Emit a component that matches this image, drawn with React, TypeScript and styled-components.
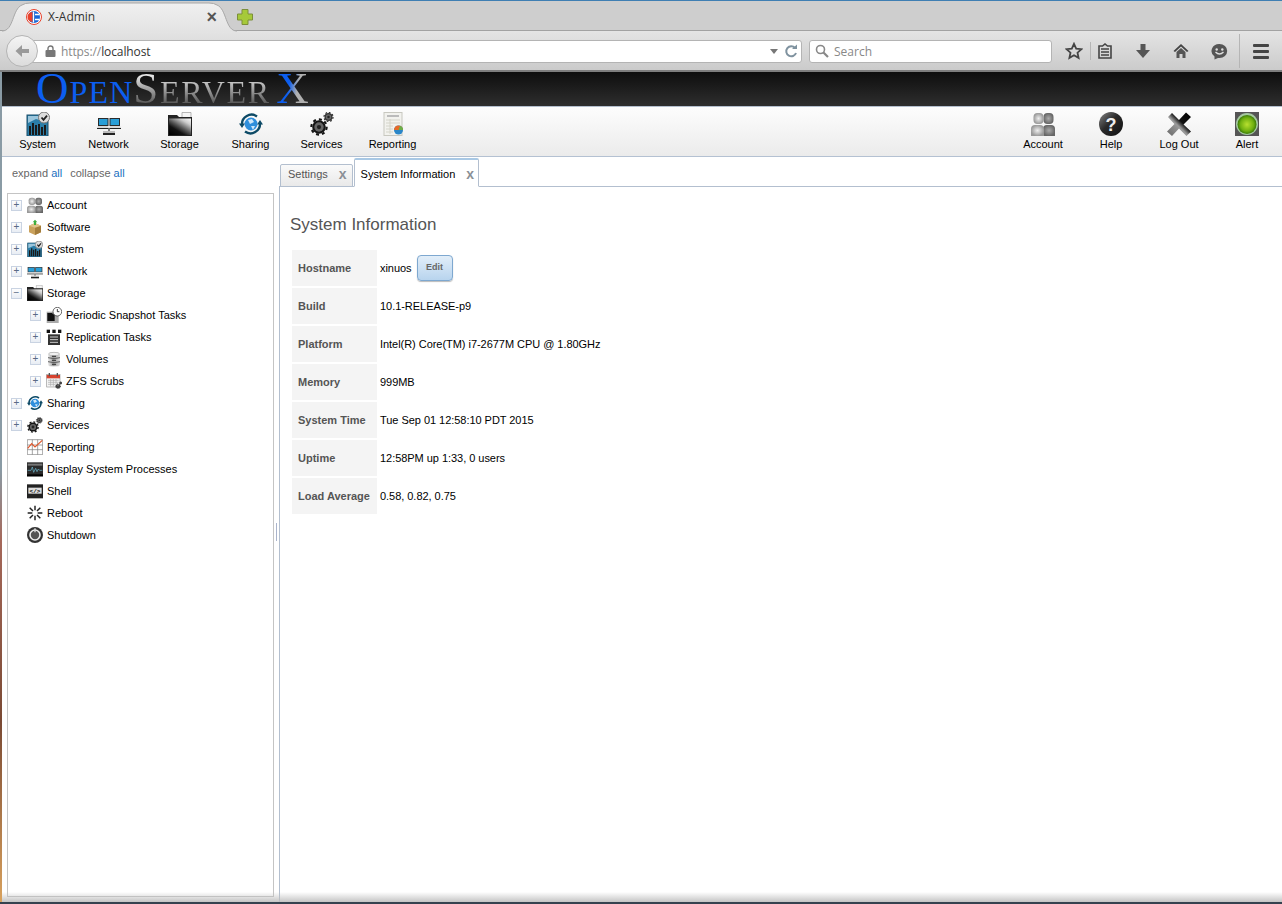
import * as React from 'react';
import styled, { createGlobalStyle } from 'styled-components';

const GlobalStyle = createGlobalStyle`
    html, body {
        margin: 0;
        padding: 0;
        background: #fff;
        overflow: hidden;
    }
    * {
        box-sizing: border-box;
    }
`;

const colors = {
    text: '#000',
    label: '#555',
    chrome: '#cecece',
    line: '#b3bfcf',
    tree: '#c4c4c4',
};

/* drawn icons, all on a 24 unit grid */

const IconBase: React.FC<{ size: number; children: React.ReactNode }> = ({ size, children }) => (
    <svg width={size} height={size} viewBox="0 0 24 24">
        {children}
    </svg>
);

interface IconProps {
    size: number;
}

const Gear: React.FC<{ cx: number; cy: number; r: number; color?: string }> = ({ cx, cy, r, color = '#151515' }) => (
    <g>
        <circle cx={cx} cy={cy} r={r * 0.8} fill={color} />
        <circle
            cx={cx}
            cy={cy}
            r={r * 0.9}
            fill="none"
            stroke={color}
            strokeWidth={r * 0.25}
            strokeDasharray={`${r * 0.35} ${r * 0.35}`}
        />
        <circle cx={cx} cy={cy} r={r * 0.55} fill="#666" />
        <circle cx={cx} cy={cy} r={r * 0.25} fill="#222" />
    </g>
);

const SystemIcon: React.FC<IconProps> = ({ size }) => (
    <IconBase size={size}>
        <rect x="1" y="3" width="21" height="21" fill="#2b7ea8" stroke="#1a4d68" />
        <path d="M2 11 L10 7 L21 10 V4 H2 Z" fill="#9cc6dc" />
        <path d="M4 23 V14 M7 23 V11 M10 23 V13 M13 23 V12 M16 23 V15 M19 23 V13" stroke="#1a1a1a" strokeWidth="2" />
        <circle cx="18" cy="5.5" r="5.5" fill="#ddd" stroke="#777" />
        <path d="M15.5 5.5 L17.5 7.8 L21 3.6" fill="none" stroke="#222" strokeWidth="1.8" />
    </IconBase>
);

const NetworkIcon: React.FC<IconProps> = ({ size }) => (
    <IconBase size={size}>
        <rect x="1.5" y="6.5" width="9.5" height="7" fill="#2a9fd8" stroke="#2b2b2b" />
        <rect x="13" y="6.5" width="9.5" height="7" fill="#2a9fd8" stroke="#2b2b2b" />
        <path d="M1 14 H11 L12 16 H0 Z M13 14 H23 L24 16 H12 Z" fill="#d8d8d8" />
        <path d="M0 16.5 H11.5 M12.5 16.5 H24" stroke="#222" />
        <path d="M12 16 V20" stroke="#555" strokeWidth="1.5" />
        <rect x="6" y="19" width="12" height="2" fill="#bbb" />
        <rect x="6" y="21" width="12" height="2" fill="#222" />
    </IconBase>
);

const StorageIcon: React.FC<IconProps> = ({ size }) => (
    <IconBase size={size}>
        <defs>
            <linearGradient id="folderFace" x1="0.1" y1="1" x2="0.9" y2="0">
                <stop offset="0" stopColor="#000" />
                <stop offset="0.3" stopColor="#111" />
                <stop offset="0.5" stopColor="#555" />
                <stop offset="0.8" stopColor="#ccc" />
                <stop offset="1" stopColor="#f0f0f0" />
            </linearGradient>
        </defs>
        <path d="M14 0.5 H23 V6 H14 Z" fill="#f4f4f4" stroke="#999" strokeWidth="0.7" />
        <path d="M0 3 H9 L11 5 H24 V24 H0 Z" fill="#222" />
        <rect x="1" y="6.5" width="22" height="16.5" fill="url(#folderFace)" />
    </IconBase>
);

const SharingIcon: React.FC<IconProps> = ({ size }) => (
    <IconBase size={size}>
        <circle cx="12" cy="12" r="6.5" fill="#2f8fdc" />
        <path d="M9 8 L13 7 L15 10 L11 12 Z M12 14 L16 14 L14 18 Z" fill="#cfe8fa" />
        <path d="M3 13 A9.5 9.5 0 0 1 18 4.5" fill="none" stroke="#0d4a66" strokeWidth="2.4" />
        <path d="M21 11 A9.5 9.5 0 0 1 6 19.5" fill="none" stroke="#0d4a66" strokeWidth="2.4" />
        <path d="M0 11.5 H6 L3 16 Z M24 12.5 H18 L21 8 Z" fill="#0d4a66" />
    </IconBase>
);

const ServicesIcon: React.FC<IconProps> = ({ size }) => (
    <IconBase size={size}>
        <Gear cx={9} cy={15} r={8.5} />
        <Gear cx={18.5} cy={5} r={5} color="#333" />
    </IconBase>
);

const ReportingIcon: React.FC<IconProps> = ({ size }) => (
    <IconBase size={size}>
        <rect x="3" y="0.5" width="18" height="23" fill="#f2f2ee" stroke="#c8c8c0" />
        <rect x="6" y="3" width="12" height="2" fill="#bbb" />
        <path d="M5 8 H19 M5 11 H19 M5 14 H12 M5 17 H12 M5 20 H12 M9 7 V22" stroke="#d4d4ca" />
        <circle cx="17.5" cy="18" r="4.5" fill="#2a86c8" />
        <path d="M13 18 A4.5 4.5 0 0 1 22 18 Z" fill="#e86a28" />
        <path d="M17.5 18 L22 18 A4.5 4.5 0 0 0 19 13.8 Z" fill="#6ab04a" />
    </IconBase>
);

const AccountIcon: React.FC<IconProps> = ({ size }) => (
    <IconBase size={size}>
        <defs>
            <radialGradient id="personLight">
                <stop offset="0" stopColor="#eee" />
                <stop offset="1" stopColor="#999" />
            </radialGradient>
            <radialGradient id="personDark">
                <stop offset="0" stopColor="#aaa" />
                <stop offset="1" stopColor="#666" />
            </radialGradient>
        </defs>
        <rect x="12.5" y="1" width="10" height="11" rx="4" fill="url(#personDark)" />
        <path d="M12 24 V17 Q12 13 16 13 H20 Q24 13 24 17 V24 Z" fill="url(#personDark)" />
        <rect x="2.5" y="1" width="10" height="11" rx="4" fill="url(#personLight)" />
        <path d="M0 24 V17 Q0 13 4 13 H9 Q13 13 13 17 V24 Z" fill="url(#personLight)" />
    </IconBase>
);

const HelpIcon: React.FC<IconProps> = ({ size }) => (
    <IconBase size={size}>
        <defs>
            <linearGradient id="helpFace" x1="0" y1="0" x2="1" y2="1">
                <stop offset="0" stopColor="#888" />
                <stop offset="0.45" stopColor="#2a2a2a" />
                <stop offset="1" stopColor="#111" />
            </linearGradient>
        </defs>
        <circle cx="12" cy="12" r="12" fill="url(#helpFace)" />
        <text x="12" y="18.5" textAnchor="middle" fontFamily="Liberation Sans" fontWeight="700" fontSize="18" fill="#eee">
            ?
        </text>
    </IconBase>
);

const LogOutIcon: React.FC<IconProps> = ({ size }) => (
    <IconBase size={size}>
        <defs>
            <linearGradient id="crossFace" x1="0" y1="1" x2="1" y2="0">
                <stop offset="0" stopColor="#666" />
                <stop offset="0.45" stopColor="#9a9a9a" />
                <stop offset="0.6" stopColor="#111" />
                <stop offset="1" stopColor="#000" />
            </linearGradient>
        </defs>
        <path
            d="M1 5 L5 1 L12 8 L19 0.5 L24 5 L16.5 12.5 L24 19.5 L19.5 24 L12 16.5 L5 24 L0 19.5 L7.5 12 Z"
            fill="url(#crossFace)"
        />
    </IconBase>
);

const AlertIcon: React.FC<IconProps> = ({ size }) => (
    <IconBase size={size}>
        <defs>
            <radialGradient id="alertLamp">
                <stop offset="0" stopColor="#b8e030" />
                <stop offset="0.7" stopColor="#6fb010" />
                <stop offset="1" stopColor="#3a7a05" />
            </radialGradient>
        </defs>
        <rect width="24" height="24" fill="#555" />
        <circle cx="12" cy="12" r="11" fill="#a5c9a0" />
        <circle cx="12" cy="12.5" r="9.5" fill="url(#alertLamp)" />
    </IconBase>
);

const SoftwareIcon: React.FC<IconProps> = ({ size }) => (
    <IconBase size={size}>
        <path d="M3 10 L12 6 L21 10 V20 L12 24 L3 20 Z" fill="#c9a15c" />
        <path d="M12 12 L21 10 V20 L12 24 Z" fill="#a47d3c" />
        <path d="M3 10 L12 6 L21 10 L12 13 Z" fill="#e0c28a" />
        <path d="M12 1 L15.5 5 H13.5 V9 H10.5 V5 H8.5 Z" fill="#3fae3f" />
    </IconBase>
);

const SnapshotIcon: React.FC<IconProps> = ({ size }) => (
    <IconBase size={size}>
        <rect x="1" y="7" width="18" height="17" fill="#aaa" />
        <path d="M2 9 H9 L11 11 H13 V21 H2 Z" fill="#111" />
        <circle cx="17" cy="7" r="6.5" fill="#fff" stroke="#222" />
        <path d="M17 3 V7 H20" fill="none" stroke="#222" strokeWidth="1.3" />
    </IconBase>
);

const ReplicationIcon: React.FC<IconProps> = ({ size }) => (
    <IconBase size={size}>
        <rect x="1" y="1" width="5" height="5" fill="#111" />
        <rect x="9.5" y="1" width="5" height="5" fill="#111" />
        <rect x="18" y="1" width="5" height="5" fill="#111" />
        <rect x="3" y="8" width="18" height="16" fill="#333" />
        <path d="M6 12 H18 M6 16 H18 M6 20 H18" stroke="#ccc" strokeWidth="1.5" />
    </IconBase>
);

const VolumesIcon: React.FC<IconProps> = ({ size }) => (
    <IconBase size={size}>
        <defs>
            <linearGradient id="volumeSide" x1="0" y1="0" x2="1" y2="0">
                <stop offset="0" stopColor="#eee" />
                <stop offset="0.45" stopColor="#999" />
                <stop offset="1" stopColor="#ddd" />
            </linearGradient>
        </defs>
        <rect x="3" y="2" width="18" height="21" rx="4" fill="url(#volumeSide)" />
        <ellipse cx="12" cy="4.5" rx="8" ry="2.5" fill="#f2f2f2" stroke="#999" strokeWidth="0.7" />
        <path d="M3 10 Q12 13 21 10 M3 16 Q12 19 21 16" fill="none" stroke="#555" strokeWidth="1.4" />
        <path d="M9 8 H15 M9 14 H15 M9 20 H15" stroke="#444" strokeWidth="2" />
    </IconBase>
);

const ScrubsIcon: React.FC<IconProps> = ({ size }) => (
    <IconBase size={size}>
        <rect x="1" y="2" width="20" height="19" fill="#f4f4f4" stroke="#999" />
        <rect x="1" y="3" width="20" height="5" fill="#d8422e" />
        <path d="M5 0 V5 M17 0 V5" stroke="#555" strokeWidth="2" />
        <path d="M3 11 H19 M3 14 H19 M3 17 H14 M7 9 V20 M11 9 V20 M15 9 V17" stroke="#aaa" />
        <Gear cx={18} cy={20} r={4} />
        <Gear cx={22} cy={15} r={2.2} />
    </IconBase>
);

const ChartIcon: React.FC<IconProps> = ({ size }) => (
    <IconBase size={size}>
        <path d="M0.5 1 H23.5 V23.5 H0.5 Z M0.5 9 H23.5 M0.5 16 H23.5 M8 1 V23.5 M16 1 V23.5" fill="#fff" stroke="#777" />
        <path d="M1 14 L7 7 L12 12 L23 2" fill="none" stroke="#e2582c" strokeWidth="1.8" />
    </IconBase>
);

const ProcessIcon: React.FC<IconProps> = ({ size }) => (
    <IconBase size={size}>
        <rect y="2" width="24" height="21" fill="#2b2b2b" />
        <rect x="1" y="4" width="22" height="3" fill="#777" />
        <path d="M1 14 H6 L8 9 L10 17 L13 11 L15 16 L17 12 L19 14 H23" fill="none" stroke="#6fc0d8" />
        <rect y="20" width="24" height="3" fill="#000" />
    </IconBase>
);

const ShellIcon: React.FC<IconProps> = ({ size }) => (
    <IconBase size={size}>
        <rect y="2" width="24" height="21" fill="#222" />
        <rect x="2" y="7" width="20" height="9" fill="#ddd" />
        <text x="12" y="14.5" textAnchor="middle" fontFamily="Liberation Mono" fontWeight="700" fontSize="9" fill="#000">
            {'</>'}
        </text>
    </IconBase>
);

const RebootIcon: React.FC<IconProps> = ({ size }) => (
    <IconBase size={size}>
        <path
            d="M12 1 V8 M12 16 V23 M1 12 H8 M16 12 H23 M4 4 L9 9 M15 15 L20 20 M20 4 L15 9 M9 15 L4 20"
            stroke="#222"
            strokeWidth="2.2"
        />
    </IconBase>
);

const ShutdownIcon: React.FC<IconProps> = ({ size }) => (
    <IconBase size={size}>
        <circle cx="12" cy="12" r="12" fill="#333" />
        <circle cx="12" cy="12" r="7.5" fill="#555" stroke="#eee" strokeWidth="2.4" />
        <path d="M12 2 V8" stroke="#ddd" strokeWidth="2" />
    </IconBase>
);

/* browser chrome icons */

const Favicon = () => (
    <svg width="16" height="16" viewBox="0 0 16 16">
        <circle cx="8" cy="8" r="7.5" fill="#fff" stroke="#e8402a" />
        <circle cx="8" cy="8" r="6" fill="#1668d8" />
        <path d="M6.5 3 A5 5 0 0 0 6.5 13 Z" fill="#e8402a" />
        <path d="M7.5 2.5 V13.5 M9 5.5 H13.5 M9 10.5 H13.5" stroke="#fff" strokeWidth="1.3" />
    </svg>
);

const NewTabIcon = () => (
    <svg width="18" height="18" viewBox="0 0 18 18">
        <path d="M6 1.5 H12 V6 H16.5 V12 H12 V16.5 H6 V12 H1.5 V6 H6 Z" fill="#a6c93a" stroke="#7c8f3a" />
    </svg>
);

const BackIcon = () => (
    <svg width="16" height="16" viewBox="0 0 16 16">
        <path d="M1.5 8 L8 2 V6 H15 V10 H8 V14 Z" fill="#9a9a9a" />
    </svg>
);

const LockIcon = () => (
    <svg width="11" height="12" viewBox="0 0 11 12">
        <path d="M3 5 V3.5 A2.5 2.5 0 0 1 8 3.5 V5" fill="none" stroke="#777" strokeWidth="1.4" />
        <rect x="0.5" y="5" width="10" height="7" rx="1" fill="#777" />
    </svg>
);

const ReloadIcon = () => (
    <svg width="14" height="14" viewBox="0 0 14 14">
        <path d="M11 4 A5 5 0 1 0 12 9" fill="none" stroke="#7f929f" strokeWidth="2" />
        <path d="M8 5 H13 V0.5 Z" fill="#7f929f" />
    </svg>
);

const SearchIcon = () => (
    <svg width="14" height="14" viewBox="0 0 14 14">
        <circle cx="5.5" cy="5.5" r="4" fill="none" stroke="#888" strokeWidth="1.6" />
        <path d="M8.5 8.5 L13 13" stroke="#888" strokeWidth="2.2" />
    </svg>
);

const StarIcon = () => (
    <svg width="18" height="18" viewBox="0 0 18 18">
        <path
            d="M9 1.8 L11.2 6.6 L16.4 7.2 L12.5 10.7 L13.6 15.9 L9 13.3 L4.4 15.9 L5.5 10.7 L1.6 7.2 L6.8 6.6 Z"
            fill="none"
            stroke="#444"
            strokeWidth="1.8"
        />
    </svg>
);

const ClipboardIcon = () => (
    <svg width="16" height="16" viewBox="0 0 16 16">
        <path d="M2 3 H5.5 L8 1 L10.5 3 H14 V15 H2 Z" fill="none" stroke="#444" strokeWidth="1.6" />
        <path d="M4 6 H12 M4 9 H12 M4 12 H12" stroke="#444" strokeWidth="1.6" />
    </svg>
);

const DownloadIcon = () => (
    <svg width="16" height="16" viewBox="0 0 16 16">
        <path d="M5.5 1 H10.5 V7 H15 L8 15 L1 7 H5.5 Z" fill="#555" />
    </svg>
);

const HomeIcon = () => (
    <svg width="16" height="16" viewBox="0 0 16 16">
        <path d="M0.5 8 L8 1 L15.5 8 L14 9 L8 3.5 L2 9 Z" fill="#444" />
        <path d="M3.5 9 L8 5 L12.5 9 V15 H9.5 V11 H6.5 V15 H3.5 Z" fill="#555" />
    </svg>
);

const SmileIcon = () => (
    <svg width="17" height="17" viewBox="0 0 17 17">
        <path d="M8.5 1 A7.7 7 0 0 1 8.5 15 H7 L3.5 16.5 V13.5 A7.7 7 0 0 1 8.5 1 Z" fill="#555" />
        <circle cx="5.7" cy="6.5" r="1.2" fill="#ddd" />
        <circle cx="11.3" cy="6.5" r="1.2" fill="#ddd" />
        <path d="M4.5 9 Q8.5 13 12.5 9" fill="none" stroke="#ddd" strokeWidth="1.4" />
    </svg>
);

const TabCurve = styled.svg`
    position: absolute;
    left: 0;
    top: 0;
`;

/* page data */

const leftTools = [
    { label: 'System', icon: SystemIcon },
    { label: 'Network', icon: NetworkIcon },
    { label: 'Storage', icon: StorageIcon },
    { label: 'Sharing', icon: SharingIcon },
    { label: 'Services', icon: ServicesIcon },
    { label: 'Reporting', icon: ReportingIcon },
];

const rightTools = [
    { label: 'Account', icon: AccountIcon },
    { label: 'Help', icon: HelpIcon },
    { label: 'Log Out', icon: LogOutIcon },
    { label: 'Alert', icon: AlertIcon },
];

type TreeNode = {
    label: string;
    icon: React.FC<IconProps>;
    toggle?: '+' | '-';
    nested?: boolean;
};

const treeNodes: TreeNode[] = [
    { label: 'Account', icon: AccountIcon, toggle: '+' },
    { label: 'Software', icon: SoftwareIcon, toggle: '+' },
    { label: 'System', icon: SystemIcon, toggle: '+' },
    { label: 'Network', icon: NetworkIcon, toggle: '+' },
    { label: 'Storage', icon: StorageIcon, toggle: '-' },
    { label: 'Periodic Snapshot Tasks', icon: SnapshotIcon, toggle: '+', nested: true },
    { label: 'Replication Tasks', icon: ReplicationIcon, toggle: '+', nested: true },
    { label: 'Volumes', icon: VolumesIcon, toggle: '+', nested: true },
    { label: 'ZFS Scrubs', icon: ScrubsIcon, toggle: '+', nested: true },
    { label: 'Sharing', icon: SharingIcon, toggle: '+' },
    { label: 'Services', icon: ServicesIcon, toggle: '+' },
    { label: 'Reporting', icon: ChartIcon },
    { label: 'Display System Processes', icon: ProcessIcon },
    { label: 'Shell', icon: ShellIcon },
    { label: 'Reboot', icon: RebootIcon },
    { label: 'Shutdown', icon: ShutdownIcon },
];

const infoRows: { label: string; value: string; edit?: boolean }[] = [
    { label: 'Hostname', value: 'xinuos', edit: true },
    { label: 'Build', value: '10.1-RELEASE-p9' },
    { label: 'Platform', value: 'Intel(R) Core(TM) i7-2677M CPU @ 1.80GHz' },
    { label: 'Memory', value: '999MB' },
    { label: 'System Time', value: 'Tue Sep 01 12:58:10 PDT 2015' },
    { label: 'Uptime', value: '12:58PM up 1:33, 0 users' },
    { label: 'Load Average', value: '0.58, 0.82, 0.75' },
];

const App: React.FC = () => {
    return (
        <Page>
            <GlobalStyle />
            <TabStrip>
                <BrowserTab>
                    <TabCurve width="235" height="31" viewBox="0 0 235 31">
                        <defs>
                            <linearGradient id="browserTab" x1="0" y1="0" x2="0" y2="1">
                                <stop offset="0" stopColor="#f0f0f0" />
                                <stop offset="1" stopColor="#e3e3e3" />
                            </linearGradient>
                        </defs>
                        <path
                            d="M0 31 V30 C12 30 10 8 20 4 Q23 2 28 2 H207 Q212 2 215 4 C225 8 223 30 235 30 V31 Z"
                            fill="url(#browserTab)"
                        />
                        <path
                            d="M0 30 C12 30 10 8 20 4 Q23 2 28 2 H207 Q212 2 215 4 C225 8 223 30 235 30"
                            fill="none"
                            stroke="#a8a8a8"
                        />
                    </TabCurve>
                    <TabFavicon>
                        <Favicon />
                    </TabFavicon>
                    <TabTitle>X-Admin</TabTitle>
                    <TabClose>×</TabClose>
                </BrowserTab>
                <NewTab>
                    <NewTabIcon />
                </NewTab>
            </TabStrip>
            <NavBar>
                <BackButton>
                    <BackIcon />
                </BackButton>
                <UrlBar>
                    <LockIcon />
                    <UrlText>
                        <UrlScheme>https://</UrlScheme>localhost
                    </UrlText>
                    <UrlCaret />
                    <ReloadIcon />
                </UrlBar>
                <SearchBar>
                    <SearchIcon />
                    <SearchText>Search</SearchText>
                </SearchBar>
                <NavIcons>
                    <NavIcon $width={33}>
                        <StarIcon />
                    </NavIcon>
                    <NavSeparator $height={18} />
                    <NavIcon $width={28}>
                        <ClipboardIcon />
                    </NavIcon>
                    <NavIcon $width={48}>
                        <DownloadIcon />
                    </NavIcon>
                    <NavIcon $width={28}>
                        <HomeIcon />
                    </NavIcon>
                    <NavIcon $width={48}>
                        <SmileIcon />
                    </NavIcon>
                    <NavSeparator $height={34} $pull={4} />
                    <MenuButton>
                        <MenuBar />
                        <MenuBar />
                        <MenuBar />
                    </MenuButton>
                </NavIcons>
            </NavBar>
            <AppFrame>
                <Banner>
                    <Logo>
                        <LogoBlue>Open</LogoBlue>
                        <LogoGrey>Server</LogoGrey> <LogoX>X</LogoX>
                    </Logo>
                </Banner>
                <Toolbar>
                    <ToolGroup>
                        {leftTools.map((tool) => (
                            <ToolItem key={tool.label} $width={71}>
                                <tool.icon size={24} />
                                <ToolLabel>{tool.label}</ToolLabel>
                            </ToolItem>
                        ))}
                    </ToolGroup>
                    <ToolGroup>
                        {rightTools.map((tool) => (
                            <ToolItem key={tool.label} $width={68}>
                                <tool.icon size={24} />
                                <ToolLabel>{tool.label}</ToolLabel>
                            </ToolItem>
                        ))}
                    </ToolGroup>
                </Toolbar>
                <Workspace>
                    <Sidebar>
                        <TreeActions>
                            <span>
                                expand <ActionAccent>all</ActionAccent>
                            </span>
                            <span>
                                collapse <ActionAccent>all</ActionAccent>
                            </span>
                        </TreeActions>
                        <TreeBox>
                            {treeNodes.map((node) => (
                                <TreeRow key={node.label + (node.nested ? '-n' : '')} $nested={node.nested}>
                                    <ToggleSlot>{node.toggle && <Toggle>{node.toggle === '+' ? '+' : '−'}</Toggle>}</ToggleSlot>
                                    <TreeIcon>
                                        <node.icon size={16} />
                                    </TreeIcon>
                                    <TreeLabel>{node.label}</TreeLabel>
                                </TreeRow>
                            ))}
                        </TreeBox>
                    </Sidebar>
                    <Splitter>
                        <SplitterGrip />
                    </Splitter>
                    <Main>
                        <TabBar>
                            <ContentTab>
                                Settings
                                <ContentTabClose>x</ContentTabClose>
                            </ContentTab>
                            <ContentTab $active>
                                System Information
                                <ContentTabClose>x</ContentTabClose>
                            </ContentTab>
                        </TabBar>
                        <TabPanel>
                            <Heading>System Information</Heading>
                            <InfoTable>
                                {infoRows.map((row) => (
                                    <React.Fragment key={row.label}>
                                        <InfoLabel>{row.label}</InfoLabel>
                                        <InfoValue>
                                            {row.value}
                                            {row.edit && <EditButton>Edit</EditButton>}
                                        </InfoValue>
                                    </React.Fragment>
                                ))}
                            </InfoTable>
                        </TabPanel>
                    </Main>
                    <BottomShade />
                </Workspace>
            </AppFrame>
        </Page>
    );
};

export default App;

const Page = styled.div`
    width: 1282px;
    height: 904px;
    display: flex;
    flex-direction: column;
    overflow: hidden;
    font-family: 'Liberation Sans', Arial, sans-serif;
    border-bottom: 2px solid #35424f;
    background: linear-gradient(180deg, #8a9ba5 0%, #8a9ba5 52%, #a5685a 60%, #7a4a34 80%, #d9a25e 100%);
`;

const TabStrip = styled.div`
    position: relative;
    height: 31px;
    flex: none;
    display: flex;
    align-items: flex-start;
    padding-left: 2px;
    background: ${colors.chrome};
    border-top: 1px solid #3f7fb3;
    border-bottom: 1px solid #a2a2a2;
`;

const BrowserTab = styled.div`
    position: relative;
    width: 235px;
    height: 30px;
    display: flex;
    align-items: center;
    padding: 1px 0 0 24px;
    font-family: 'Open Sans', sans-serif;
    font-size: 12px;
    color: #333;
`;

const TabFavicon = styled.span`
    position: relative;
    display: flex;
`;

const TabTitle = styled.span`
    position: relative;
    margin-left: 6px;
    flex: 1;
`;

const TabClose = styled.span`
    position: relative;
    margin-right: 20px;
    font-family: 'Liberation Sans', sans-serif;
    font-size: 18px;
    font-weight: 700;
    line-height: 1;
    color: #555;
`;

const NewTab = styled.div`
    position: relative;
    margin: 7px 0 0 -1px;
    display: flex;
`;

const NavBar = styled.div`
    height: 41px;
    flex: none;
    display: flex;
    align-items: center;
    padding: 1px 0 0 6px;
    background: linear-gradient(180deg, #e4e4e4, #cbcbcb);
    border-bottom: 2px solid #7e7e7e;
`;

const BackButton = styled.div`
    width: 32px;
    height: 32px;
    flex: none;
    z-index: 1;
    display: flex;
    align-items: center;
    justify-content: center;
    border-radius: 50%;
    border: 1px solid #b4b4b4;
    background: linear-gradient(180deg, #f4f4f4, #dcdcdc);
`;

const UrlBar = styled.div`
    width: 774px;
    height: 23px;
    margin-left: -10px;
    padding: 0 3px 0 16px;
    flex: none;
    display: flex;
    align-items: center;
    background: #fff;
    border: 1px solid #b4b4b4;
    border-radius: 0 3px 3px 0;
    font-family: 'Open Sans', sans-serif;
    font-size: 12px;
    color: #333;
`;

const UrlText = styled.span`
    margin-left: 5px;
    flex: 1;
    letter-spacing: -0.1px;
`;

const UrlScheme = styled.span`
    color: #888;
`;

const UrlCaret = styled.span`
    width: 0;
    height: 0;
    margin-right: 6px;
    border-left: 4px solid transparent;
    border-right: 4px solid transparent;
    border-top: 5px solid #777;
`;

const SearchBar = styled.div`
    width: 243px;
    height: 23px;
    margin-left: 7px;
    padding-left: 5px;
    flex: none;
    display: flex;
    align-items: center;
    background: #fff;
    border: 1px solid #b4b4b4;
    border-radius: 3px;
`;

const SearchText = styled.span`
    margin-left: 5px;
    font-family: 'Open Sans', sans-serif;
    font-size: 12px;
    color: #888;
`;

const NavIcons = styled.div`
    flex: 1;
    display: flex;
    align-items: center;
    padding-left: 5px;
`;

const NavIcon = styled.div<{ $width: number }>`
    width: ${(p) => p.$width}px;
    display: flex;
    justify-content: center;
`;

const NavSeparator = styled.div<{ $height: number; $pull?: number }>`
    width: 1px;
    height: ${(p) => p.$height}px;
    margin-left: ${(p) => -(p.$pull || 0)}px;
    background: #b5b5b5;
`;

const MenuButton = styled.div`
    margin-left: 13px;
    width: 16px;
    display: flex;
    flex-direction: column;
    gap: 3px;
`;

const MenuBar = styled.div`
    height: 3px;
    border-radius: 1px;
    background: #444;
`;

const AppFrame = styled.div`
    flex: 1;
    min-height: 0;
    margin-left: 2px;
    display: flex;
    flex-direction: column;
    background: #fff;
`;

const Banner = styled.div`
    height: 34px;
    flex: none;
    padding-left: 34px;
    background: linear-gradient(180deg, #0e0e0e, #2e2e2e);
`;

const Logo = styled.div`
    font-family: 'Liberation Serif', 'Times New Roman', serif;
    font-size: 45px;
    line-height: 32px;
    font-variant: small-caps;
    white-space: nowrap;
    word-spacing: -6px;
`;

const LogoBlue = styled.span`
    color: #0c5ef0;
    letter-spacing: 1.1px;
`;

const LogoGrey = styled.span`
    background: linear-gradient(180deg, #fff 15%, #555 82%);
    -webkit-background-clip: text;
    background-clip: text;
    color: transparent;
    letter-spacing: 1.7px;
`;

const LogoX = styled.span`
    background: linear-gradient(100deg, #0c5ef0 40%, #b0b0b0 62%);
    -webkit-background-clip: text;
    background-clip: text;
    color: transparent;
`;

const Toolbar = styled.div`
    height: 51px;
    flex: none;
    display: flex;
    justify-content: space-between;
    background: linear-gradient(180deg, #fdfdfd, #ebebeb);
    border-top: 1px solid #b4bfce;
    border-bottom: 1px solid #b4c1d2;
`;

const ToolGroup = styled.div`
    display: flex;
    padding-right: 1px;
`;

const ToolItem = styled.div<{ $width: number }>`
    width: ${(p) => p.$width}px;
    padding-top: 5px;
    display: flex;
    flex-direction: column;
    align-items: center;
`;

const ToolLabel = styled.span`
    margin-top: 1px;
    font-size: 11px;
    line-height: 14px;
    color: ${colors.text};
`;

const Workspace = styled.div`
    position: relative;
    flex: 1;
    min-height: 0;
    display: flex;
`;

const Sidebar = styled.div`
    width: 272px;
    flex: none;
    display: flex;
    flex-direction: column;
    padding: 0 0 5px 5px;
`;

const TreeActions = styled.div`
    height: 36px;
    flex: none;
    display: flex;
    align-items: center;
    gap: 8px;
    padding: 0 0 5px 5px;
    font-size: 11px;
    color: #666;
`;

const ActionAccent = styled.span`
    color: #1a6fc0;
`;

const TreeBox = styled.div`
    flex: 1;
    background: #fff;
    border: 1px solid ${colors.tree};
`;

const TreeRow = styled.div<{ $nested?: boolean }>`
    height: 22px;
    display: flex;
    align-items: center;
    padding-left: ${(p) => (p.$nested ? 22 : 3)}px;
`;

const ToggleSlot = styled.span`
    width: 16px;
    flex: none;
    display: flex;
`;

const Toggle = styled.span`
    width: 11px;
    height: 11px;
    display: flex;
    align-items: center;
    justify-content: center;
    border: 1px solid #c9d3e2;
    background: linear-gradient(180deg, #fdfdfd, #e8edf4);
    font-size: 10px;
    line-height: 1;
    color: #5a6a85;
`;

const TreeIcon = styled.span`
    width: 20px;
    height: 16px;
    flex: none;
    display: flex;
`;

const TreeLabel = styled.span`
    font-size: 11px;
    color: ${colors.text};
    white-space: nowrap;
`;

const Splitter = styled.div`
    width: 5px;
    flex: none;
    display: flex;
    align-items: center;
    justify-content: center;
`;

const SplitterGrip = styled.div`
    width: 1px;
    height: 18px;
    margin-top: 5px;
    background: #aab4cc;
`;

const Main = styled.div`
    flex: 1;
    min-width: 0;
    display: flex;
    flex-direction: column;
`;

const TabBar = styled.div`
    height: 29px;
    flex: none;
    display: flex;
    align-items: flex-end;
    padding-left: 1px;
    gap: 1px;
    border-bottom: 1px solid ${colors.line};
    margin-top: 1px;
`;

const ContentTab = styled.div<{ $active?: boolean }>`
    height: ${(p) => (p.$active ? 29 : 23)}px;
    margin-bottom: -1px;
    padding: ${(p) => (p.$active ? 1 : 0)}px ${(p) => (p.$active ? 4 : 5)}px ${(p) => (p.$active ? 0 : 4)}px ${(p) => (p.$active ? 6 : 7)}px;
    display: flex;
    align-items: center;
    font-size: 11px;
    color: ${(p) => (p.$active ? '#000' : '#555')};
    background: ${(p) => (p.$active ? '#fff' : 'linear-gradient(180deg, #fafafa, #e9e9e9)')};
    border: 1px solid ${colors.line};
    border-top: ${(p) => (p.$active ? '2px solid #a9c8e4' : `1px solid ${colors.line}`)};
    border-bottom: ${(p) => (p.$active ? '1px solid #fff' : `1px solid ${colors.line}`)};
    border-radius: 2px 2px 0 0;
`;

const ContentTabClose = styled.span`
    margin-left: 11px;
    font-size: 14px;
    font-weight: 700;
    color: #8a8f96;
`;

const TabPanel = styled.div`
    flex: 1;
    padding: 28px 0 0 10px;
    border-left: 1px solid ${colors.line};
`;

const Heading = styled.h2`
    margin: 0 0 15px;
    font-size: 17px;
    line-height: 20px;
    font-weight: 400;
    color: #555;
`;

const InfoTable = styled.div`
    margin-left: 2px;
    display: grid;
    grid-template-columns: 85px 1fr;
    grid-auto-rows: 36px;
    row-gap: 2px;
`;

const InfoLabel = styled.div`
    display: flex;
    align-items: center;
    padding-left: 6px;
    background: #f4f4f4;
    font-size: 11px;
    font-weight: 700;
    color: ${colors.label};
`;

const InfoValue = styled.div`
    display: flex;
    align-items: center;
    padding-left: 3px;
    font-size: 11px;
    letter-spacing: -0.04px;
    color: ${colors.text};
`;

const EditButton = styled.button`
    width: 36px;
    height: 26px;
    margin-left: 5px;
    padding: 0 0 3px;
    font-family: 'Liberation Sans', sans-serif;
    font-size: 9px;
    font-weight: 700;
    color: #666;
    background: linear-gradient(180deg, #e2eef9, #b8d4ee);
    border: 1px solid #7ea8d0;
    border-radius: 4px;
    box-shadow: 0 1px 1px #bbb;
`;

const BottomShade = styled.div`
    position: absolute;
    left: 0;
    right: 0;
    bottom: 0;
    height: 10px;
    pointer-events: none;
    background: linear-gradient(180deg, rgba(200, 200, 200, 0), rgba(190, 190, 190, 0.9));
`;
